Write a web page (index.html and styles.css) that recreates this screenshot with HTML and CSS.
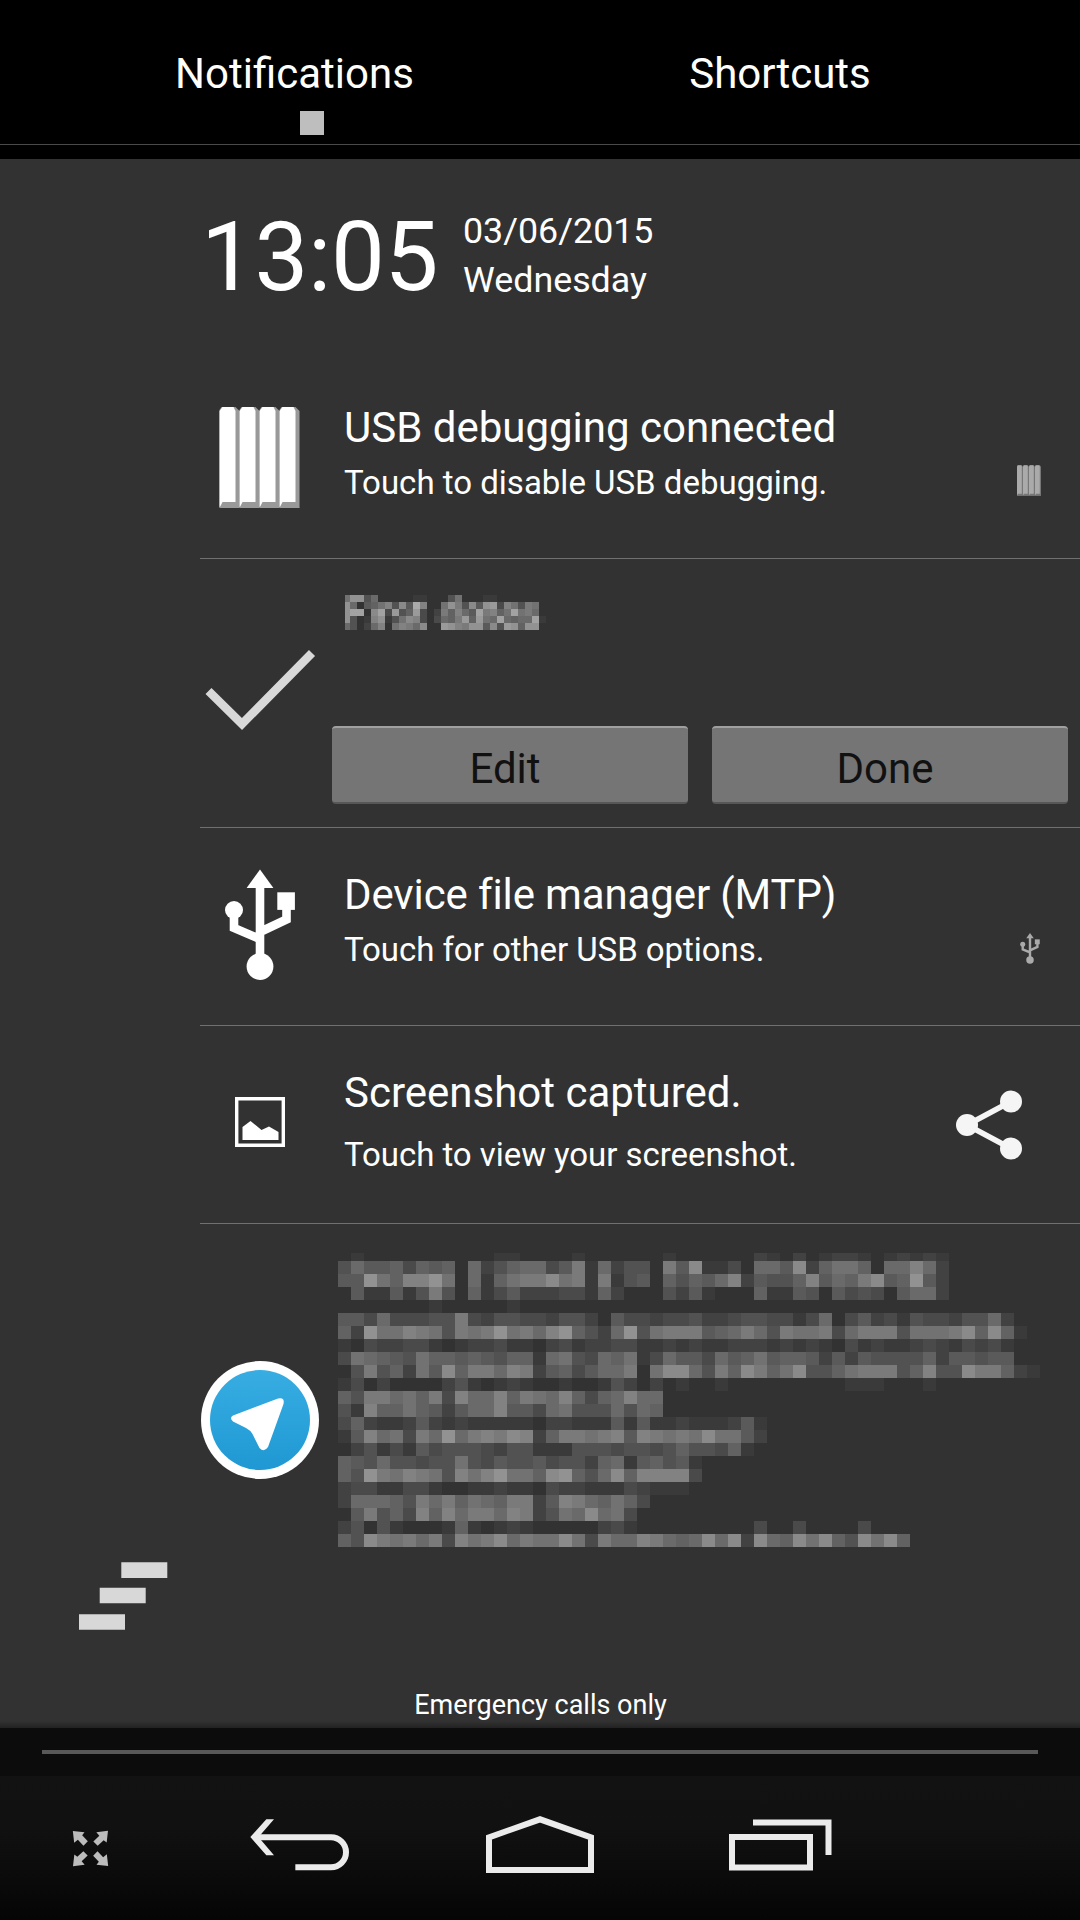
FILE: index.html
```html
<!DOCTYPE html>
<html lang="en">
<head>
<meta charset="utf-8">
<title>Notifications</title>
<link rel="stylesheet" href="styles.css">
</head>
<body>
<svg class="defs" aria-hidden="true">
  <defs>
    <symbol id="usb" viewBox="0 0 100 130">
      <circle cx="50" cy="106.500" r="13.400"/>
      <path d="M50 9.500 63.400 28H36.600Z"/>
      <circle cx="24" cy="50" r="9"/>
      <path d="M67.300 32.300h17.600v17.600H67.300z"/>
      <path d="M50 26v70M24 50v18l26 11M76.500 48v11.500L50 72" fill="none" stroke="currentColor" stroke-width="8.600"/>
    </symbol>
    <symbol id="debug" viewBox="0 0 80 101">
      <g id="slat">
        <path fill="var(--shade)" d="M0 3 2 0h14l4 4v97H0z"/>
        <path fill="currentColor" d="M0 4 3 0h11l2 4v91L0 100z"/>
        <path fill="var(--shade)" d="M3 95h13l4 6H0z"/>
      </g>
      <use href="#slat" x="20"/><use href="#slat" x="40"/><use href="#slat" x="60"/>
    </symbol>
  </defs>
</svg>

<header class="tabs">
  <div class="tab tab-active">Notifications</div>
  <div class="tab">Shortcuts</div>
</header>

<main class="panel">
  <aside class="rail">
    <svg class="clear" width="90" height="70" viewBox="0 0 90 70"><path d="M42.300 .3h46v15.600h-46zM20.700 25.700h46v15.600h-46zM0 52.200h46v15.600H0z"/></svg>
  </aside>
  <div class="feed">
    <section class="clock">
      <div class="time">13:05</div>
      <div class="date"><span>03/06/2015</span><span>Wednesday</span></div>
    </section>

    <article class="note">
      <div class="icon"><svg class="debug-big" width="81" height="101"><use href="#debug"/></svg></div>
      <div class="text"><h2>USB debugging connected</h2><p>Touch to disable USB debugging.</p></div>
      <svg class="small debug-small" width="24" height="31"><use href="#debug"/></svg>
    </article>

    <article class="note task">
      <div class="icon"><svg width="112" height="82" viewBox="0 0 112 82"><path d="M4.500 42 38 75 108 4" fill="none" stroke="#d8d8d8" stroke-width="8.500"/></svg></div>
      <div class="task-body">
        <svg class="mosaic mosaic-title" width="203" height="35" role="img" data-mosaic="title" data-cell="7"></svg>
        <div class="actions"><button>Edit</button><button>Done</button></div>
      </div>
    </article>

    <article class="note mtp">
      <div class="icon"><svg width="100" height="130"><use href="#usb"/></svg></div>
      <div class="text"><h2>Device file manager (MTP)</h2><p>Touch for other USB options.</p></div>
      <svg class="small usb-small" width="28" height="37"><use href="#usb"/></svg>
    </article>

    <article class="note shot">
      <div class="icon"><svg width="50" height="50" viewBox="0 0 50 50"><path d="M1.700 1.700h46.600v46.600H1.700z" fill="none" stroke="#fff" stroke-width="3.400"/><path fill="#fff" d="M7.500 43V30l8-6 11 9 7.500-3.500 9.500 5.500v8z"/></svg></div>
      <div class="text"><h2>Screenshot captured.</h2><p>Touch to view your screenshot.</p></div>
      <svg class="share" width="66" height="70" viewBox="0 0 66 70"><g fill="#f5f5f5"><circle cx="11" cy="35" r="11"/><circle cx="55" cy="11.500" r="11"/><circle cx="55" cy="58.500" r="11"/></g><path d="M55 11.500 11 35l44 23.500" fill="none" stroke="#f5f5f5" stroke-width="5.500"/></svg>
    </article>

    <article class="note chat">
      <div class="icon">
        <svg width="118" height="118" viewBox="0 0 118 118">
          <defs><linearGradient id="sky" x2="0" y2="1"><stop offset="0" stop-color="#37ade2"/><stop offset="1" stop-color="#1f98d3"/></linearGradient></defs>
          <circle cx="59" cy="59" r="59" fill="#fff"/><circle cx="59" cy="59" r="50" fill="url(#sky)"/>
          <path fill="#fff" d="M32 54.500 77 37.600Q84 36 82.500 43L67 86Q63 92 58.500 87L51.500 73Q49 69 45 67L32 60.500Q28 57 32 54.500Z"/>
        </svg>
      </div>
      <svg class="mosaic" width="702" height="312" role="img" data-mosaic="chat" data-cell="13"></svg>
    </article>
  </div>
</main>

<div class="carrier">Emergency calls only</div>
<div class="handle"><div class="bar"></div></div>

<nav class="nav">
  <div class="key key-expand"><svg width="37" height="37" viewBox="36 90 110 111"><path id="arw" d="M38 93 73 97 66 106 83 124 70 137 53 119 42 128Z"/><use href="#arw" transform="rotate(90 91 145.500)"/><use href="#arw" transform="rotate(180 91 145.500)"/><use href="#arw" transform="rotate(270 91 145.500)"/></svg></div>
  <div class="key"><svg width="100" height="52" viewBox="569 56 300 156"><path d="M570 110 618 57H641L600 104V117L641 165H618Z"/><path d="M590 111H812a45 45 0 0 1 0 90H705" fill="none" stroke="currentColor" stroke-width="18"/></svg></div>
  <div class="key"><svg width="108" height="57" viewBox="0 0 108 57"><path d="M3 21.300V54h102V21.300L54 3.300Z" fill="none" stroke="currentColor" stroke-width="6"/></svg></div>
  <div class="key"><svg width="103" height="52" viewBox="0 0 103 52"><path d="M3 18h78v30.500H3zM24 3.500h75.500v32.500" fill="none" stroke="currentColor" stroke-width="6"/></svg></div>
</nav>
<script src="mosaic.js"></script>
</body>
</html>
```
FILE: styles.css
```css
* { box-sizing: border-box; margin: 0; }
body {
  width: 1080px; height: 1920px; overflow: hidden;
  display: flex; flex-direction: column;
  background: #000; color: #fff;
  font-family: Roboto, sans-serif;
}
svg { display: block; fill: currentColor; flex: none; }
.defs { width: 0; height: 0; position: absolute; }

.tabs {
  height: 145px; flex: none; display: flex;
  padding: 49px 30px 0 24px;
  border-bottom: 1px solid #4a4a4a;
  font-size: 42px; line-height: 50px;
}
.tab { flex: 1; text-align: center; }
.tab:first-child { flex: 0 0 541px; }
.tab:last-child { flex: 0 0 430px; }
.tab-active::after {
  content: ""; display: block; width: 24px; height: 24px;
  margin: 12px 0 0 276px; background: #bebebe;
}

.panel {
  margin-top: 14px; height: 1531px; flex: none;
  display: flex; background: #323232;
}
.rail {
  width: 200px; padding: 0 0 58px 79px;
  display: flex; align-items: flex-end;
}
.clear { color: #d8d8d8; }
.feed { flex: 1; display: flex; flex-direction: column; }

.clock { height: 202px; display: flex; padding: 50px 0 0 1px; }
.time { width: 262px; font-size: 96px; line-height: 96px; letter-spacing: -.4px; }
.date { font-size: 35.8px; line-height: 49px; margin-top: -2px; display: flex; flex-direction: column; }
.date span { display: block; }

.note {
  height: 198px; flex: none; display: flex;
  border-bottom: 1px solid #707070;
}
.icon {
  width: 120px; height: 192px; flex: none;
  display: flex; align-items: center; justify-content: center;
}
.text { width: 648px; padding: 42px 0 0 24px; }
h2 { font-size: 42px; line-height: 50px; font-weight: 400; white-space: nowrap; }
p { margin-top: 10px; font-size: 33px; line-height: 40px; white-space: nowrap; }
.mtp h2 { letter-spacing: -.12px; }
.mtp p, .shot p { letter-spacing: -.05px; }
.mtp .icon { height: 194px; }
.shot p { margin-top: 17px; }
.debug-big { color: #fff; --shade: #999; margin-left: -1px; }
.debug-small { color: #aaa; --shade: #777; margin: 104px 0 0 49px; }
.usb-small { color: #aaa; margin: 102px 0 0 48px; }
.share { margin: 64px 0 0 -12px; }

.task { height: 269px; }
.task .icon { height: 262px; }
.task-body { flex: 1; padding: 36px 12px 0 12px; }
.mosaic-title { margin-left: 11px; clip-path: inset(0 0 0 2px); }
.actions { display: flex; gap: 24px; margin-top: 96px; }
button {
  flex: 1; height: 78px; padding: 8px 10px 0 0;
  border: 0; border-top: 2px solid #a0a0a0; border-bottom: 2px solid #575757;
  border-radius: 4px; background: #757575; color: #111;
  font: 42px/50px Roboto, sans-serif;
}

.chat { height: auto; border: 0; padding-top: 24px; }
.chat .icon { height: 344px; }
.chat .mosaic { margin-left: 18px; }

.carrier {
  height: 38px; flex: none; text-align: center; text-indent: 1px;
  font-size: 27px; line-height: 30px;
  background: linear-gradient(#323232 82%, #222);
}
.handle { height: 48px; flex: none; background: #0c0c0c; padding: 22px 42px 0; }
.bar { height: 4px; background: #595959; }

.nav {
  height: 144px; flex: none;
  display: grid; grid-template-columns: 180px 240px 240px 240px;
  background: linear-gradient(#121212, #111 35%, #050505);
}
.key { display: flex; align-items: center; justify-content: center; padding-bottom: 7px; color: #ebebeb; }
.key-expand { padding-bottom: 0; color: #bcbcbc; }
```
FILE: mosaic.js
```js
// Obscured text: each hex digit is the brightness of one tile.
const mosaics = {
  title: [
    "8cc4700000110004800011",
    "c70568a4b5fa008c94b5cd3a84980",
    "cee0be3d46d30296a75e9a68e8970",
    "c401ac148ba303769d6d87e7677e1",
    "74027a08a97b00dca9cc5b4dc6cc0"
  ],
  chat: [
    "010000000000110000100000010000002102012210121210000000",
    "475563656072467735917244095b1130775b26886077a720000000",
    "55c86aac80716899b8919145064657a25446a5769b56c520000000",
    "051151494061352223316200042510006115405343057720000000",
    "000000010000010",
    "553733344932443324420533233422344331370352314332447200",
    "62c88a984989c897ac6427c4899956797498893799948889b6b610",
    "103223310122311023122331121211222121210312112321323100",
    "387654866565466178437681375537568566525254444625545500",
    "04946285b6997a92563577908bb7496b968b446899946a44b99621",
    "130200002410121001001420201001000000000111000100000000",
    "649978693a77a6987a6367a7700",
    "41a668652577a55378444747600",
    "362112521211111022111515112111251",
    "15a78397c79a9ba269989a5a9898b88520",
    "024131534443244111444344346443610",
    "6547443448435445344267156451",
    "64c98a984a8ac886bc647b6aaaa3",
    "233113310011211032211132111",
    "27776497968769925a976863000",
    "059463a6a7997a92487b7830000",
    "24041000161012100000231000000000300300003",
    "64b989793a89b7988b83977a9767b7b2b76b8b64b8b6",
    "00000000000000000000000000000000000000000000"
  ]
};
const NS = "http://www.w3.org/2000/svg";
document.querySelectorAll("[data-mosaic]").forEach(svg => {
  const cell = +svg.dataset.cell;
  mosaics[svg.dataset.mosaic].forEach((row, y) => {
    [...row].forEach((digit, x) => {
      const level = parseInt(digit, 16);
      if (!level) return;
      const gray = 50 + level * 8;
      const r = document.createElementNS(NS, "rect");
      const clip = cell === 13 && y === 0 ? 5 : 0;
      r.setAttribute("x", x * cell);
      r.setAttribute("y", y * cell + clip);
      r.setAttribute("width", cell);
      r.setAttribute("height", cell - clip);
      r.setAttribute("fill", `rgb(${gray},${gray},${gray})`);
      svg.append(r);
    });
  });
});
```
